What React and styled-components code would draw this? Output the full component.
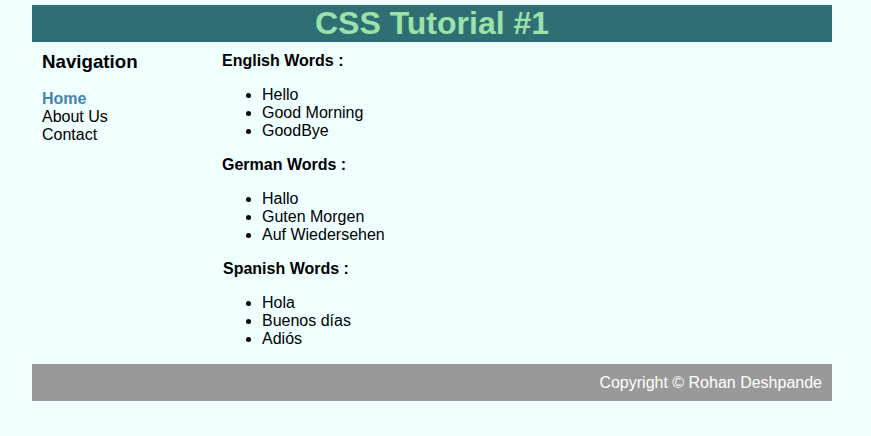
import React from "react";
import styled, { createGlobalStyle } from "styled-components";

const GlobalStyle = createGlobalStyle`
  body {
    margin: 0;
    background-color: #f0ffff;
    font-family: "Liberation Sans", Arial, sans-serif;
  }
`;

const Page = styled.div`
  width: 800px;
  margin: 5px 0 0 32px;
`;

const Header = styled.header`
  background-color: #2f6e73;
  height: 37px;
  display: flex;
  justify-content: center;
  align-items: center;
  h1 {
    margin: 0;
    font-size: 32px;
    line-height: 37px;
    color: #99e2a8;
  }
`;

const Main = styled.div`
  display: flex;
  padding-bottom: 16px;
`;

const Nav = styled.nav`
  width: 180px;
  padding-left: 10px;
  h3 {
    margin: 9px 0 17px;
    font-size: 18.72px;
    line-height: 22px;
  }
  a {
    display: block;
    font-size: 16px;
    line-height: 18px;
    color: black;
    text-decoration: none;
  }
  a.active {
    color: #4682b4;
    font-weight: bold;
  }
`;

const Content = styled.section`
  flex: 1;
`;

const Title = styled.h4`
  margin: ${(p) => (p.first ? "10px" : "16px")} 0 16px;
  padding-left: ${(p) => p.shift || 0}px;
  font-size: 16px;
  line-height: 18px;
`;

const Words = styled.ul`
  margin: 0;
  padding-left: 40px;
  li {
    font-size: 16px;
    line-height: 18px;
  }
`;

const Footer = styled.footer`
  background-color: #999999;
  height: 37px;
  display: flex;
  justify-content: flex-end;
  align-items: center;
  padding-right: 10px;
  color: white;
  font-size: 16px;
`;

const groups = [
  { title: "English Words :", words: ["Hello", "Good Morning", "GoodBye"] },
  { title: "German Words :", words: ["Hallo", "Guten Morgen", "Auf Wiedersehen"] },
  { title: "Spanish Words :", words: ["Hola", "Buenos días", "Adiós"], shift: 1 },
];

export default function App() {
  return (
    <Page>
      <GlobalStyle />
      <Header>
        <h1>CSS Tutorial #1</h1>
      </Header>
      <Main>
        <Nav>
          <h3>Navigation</h3>
          <a className="active" href="#">Home</a>
          <a href="#">About Us</a>
          <a href="#">Contact</a>
        </Nav>
        <Content>
          {groups.map((g, i) => (
            <div key={g.title}>
              <Title first={i === 0} shift={g.shift}>{g.title}</Title>
              <Words>
                {g.words.map((w) => (
                  <li key={w}>{w}</li>
                ))}
              </Words>
            </div>
          ))}
        </Content>
      </Main>
      <Footer>Copyright © Rohan Deshpande</Footer>
    </Page>
  );
}
